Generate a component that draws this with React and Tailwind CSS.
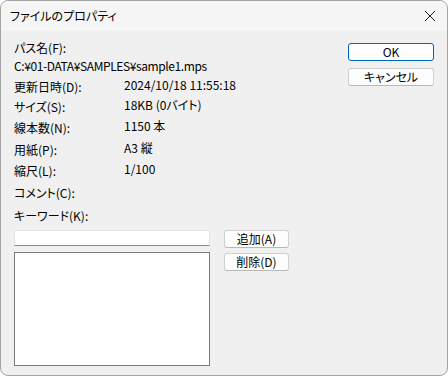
export default function App() {
  const rows = [
    { label: "更新日時(D):", value: "2024/10/18 11:55:18", mt: "mt-[7px]" },
    { label: "サイズ(S):", value: "18KB (0バイト)", mt: "mt-[6px]" },
    { label: "線本数(N):", value: "1150 本", mt: "mt-[7px]" },
    { label: "用紙(P):", value: "A3 縦", mt: "mt-[8px]" },
    { label: "縮尺(L):", value: "1/100", mt: "mt-[7px]" },
    { label: "コメント(C):", value: "", mt: "mt-[8px]" },
  ];

  return (
    <div className="w-[448px] h-[376px] bg-white">
      <div className="w-full h-full flex flex-col overflow-hidden rounded-[8px] border border-[#a3a3a3] bg-[#f0f0f0] text-[12px] text-black font-['Noto_Sans_CJK_JP','Noto_Sans',sans-serif] [font-feature-settings:'palt']">
        {/* Title bar */}
        <div className="h-[30px] shrink-0 flex items-center justify-between bg-[#f5f5f5] pl-[9px] pr-[10px]">
          <span className="leading-[14px]">ファイルのプロパティ</span>
          <svg width="12" height="12" viewBox="0 0 12 12" className="mr-[1px]">
            <path d="M1 1 L11 11 M11 1 L1 11" stroke="#1a1a1a" strokeWidth="1" fill="none" />
          </svg>
        </div>

        {/* Body */}
        <div className="flex-1 flex flex-col px-[13px]">
          <div className="flex justify-between">
            <div className="flex flex-col">
              <div className="mt-[10px] h-[14px] leading-[14px]">パス名(F):</div>
              <div className="mt-[4px] h-[14px] leading-[14px] tracking-[-0.4px]">C:¥01-DATA¥SAMPLES¥sample1.mps</div>
              {rows.map((r) => (
                <div key={r.label} className={`${r.mt} h-[14px] leading-[14px] flex items-start`}>
                  <span className="w-[110px]">{r.label}</span>
                  {r.value && <span className="-mt-[2px]">{r.value}</span>}
                </div>
              ))}
              <div className="mt-[9px] h-[14px] leading-[14px]">キーワード(K):</div>
            </div>

            <div className="flex flex-col w-[86px] mt-[12px]">
              <button className="h-[18px] rounded-[3px] border-[1.5px] border-[#0067c0] bg-[#fdfdfd] leading-[14px] text-[12px]">
                OK
              </button>
              <button className="mt-[7px] h-[18px] rounded-[3px] border border-[#d0d0d0] border-b-[#b8b8b8] bg-[#fdfdfd] leading-[14px] text-[12px]">
                キャンセル
              </button>
            </div>
          </div>

          <div className="flex mt-[7px]">
            <div className="flex flex-col w-[196px]">
              <div className="h-[16px] bg-white border border-[#e6e6e6] border-b-[#8a8a8a]"></div>
              <div className="mt-[6px] h-[114px] bg-white border border-[#7a7a7a]"></div>
            </div>
            <div className="flex flex-col ml-[14px] w-[65px]">
              <button className="h-[18px] rounded-[3px] border border-[#d0d0d0] border-b-[#b8b8b8] bg-[#fdfdfd] leading-[14px] text-[12px]">
                追加(A)
              </button>
              <button className="mt-[5px] h-[18px] rounded-[3px] border border-[#d0d0d0] border-b-[#b8b8b8] bg-[#fdfdfd] leading-[14px] text-[12px]">
                削除(D)
              </button>
            </div>
          </div>
        </div>
      </div>
    </div>
  );
}
